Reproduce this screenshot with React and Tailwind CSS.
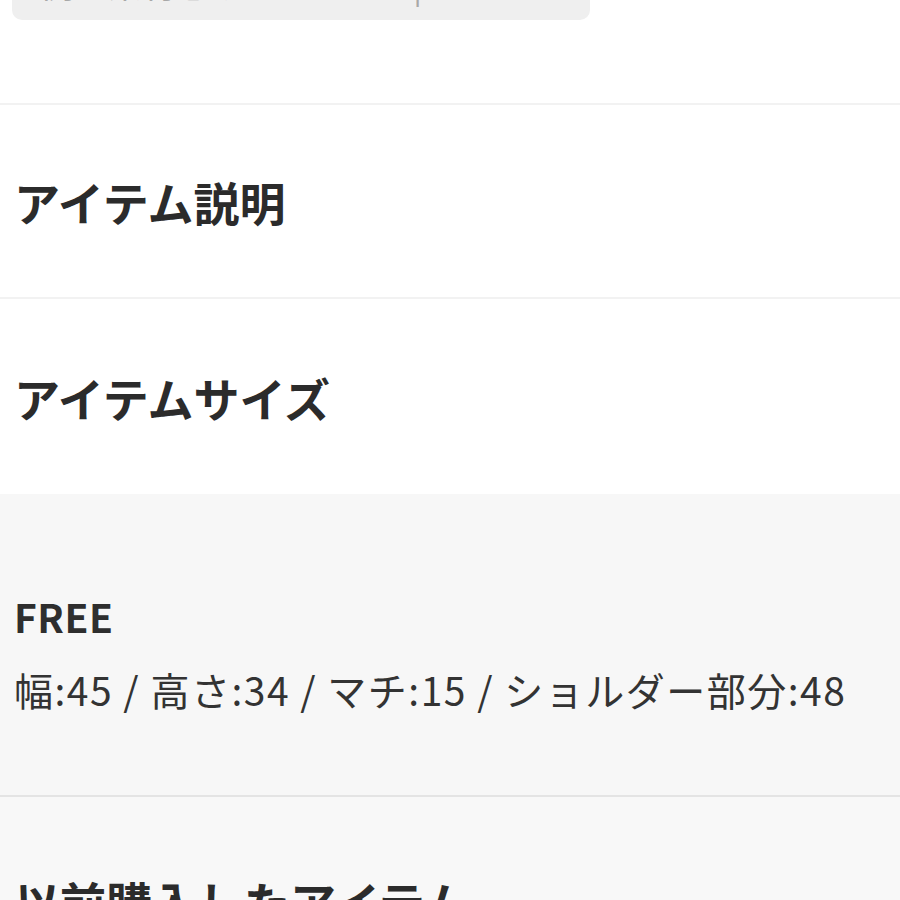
import React from 'react'

const font = { fontFamily: '"Noto Sans CJK JP", "Noto Sans", sans-serif' }

function Section({ title, height }) {
	return (
		<div className={`border-t-2 border-[#f2f2f2] flex items-center px-[14px] ${height}`}>
			<h2 className="text-[46px] font-bold text-[#2b2b2b] leading-none">{title}</h2>
		</div>
	)
}

export default function App() {
	return (
		<div className="w-[900px] min-h-[900px] bg-white overflow-hidden" style={font}>
			{/* 入力欄 (上で切れている) */}
			<div className="-mt-[44px] mx-[12px] w-[578px] h-[64px] bg-[#efefef] rounded-[10px] flex items-end px-[28px] pb-[19px] overflow-hidden">
				<span className="text-[34px] text-[#a8a8a8] leading-none whitespace-nowrap">例：素材感やサイズなど|</span>
			</div>

			<div className="h-[83px]" />

			<Section title="アイテム説明" height="h-[194px]" />
			<Section title="アイテムサイズ" height="h-[197px]" />

			{/* サイズ表 */}
			<div className="bg-[#f7f7f7] h-[301px] flex flex-col px-[14px] pt-[99px] gap-[26px]">
				<p className="text-[39px] font-semibold text-[#2e2e2e] leading-[1.2] tracking-[0.5px]">FREE</p>
				<p className="text-[39px] text-[#333] leading-[1.2] tracking-[1.5px] whitespace-nowrap">
					幅:45 / 高さ:34 / マチ:15 / ショルダー部分:48
				</p>
			</div>

			<div className="bg-[#f8f8f8] border-t-2 border-[#e4e4e4] h-[200px] px-[14px] pt-[81px]">
				<h2 className="text-[46px] font-bold text-[#2b2b2b] leading-none whitespace-nowrap">以前購入したアイテム</h2>
			</div>
		</div>
	)
}
